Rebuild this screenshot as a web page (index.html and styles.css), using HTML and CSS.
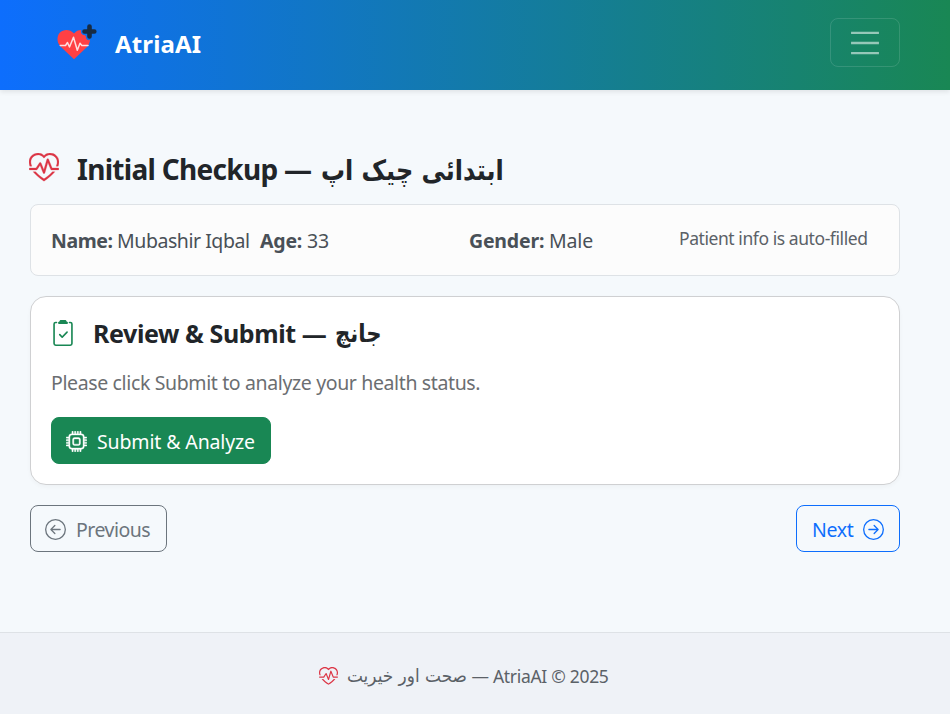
FILE: index.html
```html
<!DOCTYPE html>
<html lang="en">
<head>
<meta charset="utf-8">
<title>AtriaAI</title>
<link rel="stylesheet" href="styles.css">
</head>
<body>
<svg class="sprite" aria-hidden="true">
  <symbol id="heart-pulse" viewBox="0 0 16 16"><path d="m8 2.748-.717-.737C5.6.281 2.514.878 1.4 3.053.918 3.995.78 5.323 1.508 7H.43c-2.128-5.697 4.165-8.83 7.394-5.857q.09.083.176.171a3 3 0 0 1 .176-.17c3.23-2.974 9.522.159 7.394 5.856h-1.078c.728-1.677.59-3.005.108-3.947C13.486.878 10.4.28 8.717 2.01zM2.212 10h1.315C4.593 11.183 6.05 12.458 8 13.795c1.949-1.337 3.407-2.612 4.473-3.795h1.315c-1.265 1.566-3.14 3.25-5.788 5-2.648-1.75-4.523-3.434-5.788-5"/><path d="M10.464 3.314a.5.5 0 0 0-.945.049L7.921 8.956 6.464 5.314a.5.5 0 0 0-.88-.091L3.732 8H.5a.5.5 0 0 0 0 1H4a.5.5 0 0 0 .416-.223l1.473-2.209 1.647 4.118a.5.5 0 0 0 .945-.049l1.598-5.593 1.457 3.642A.5.5 0 0 0 12 9h3.5a.5.5 0 0 0 0-1h-3.162z"/></symbol>
</svg>
<nav class="navbar">
  <a class="brand">
    <svg class="logo" viewBox="0 0 40 36">
      <path fill="#ff4044" d="M17 35.200 4 23C-.5 19-.5 12 3 8.500 6.500 5 13 5 17 9.500c2-2.500 4.500-3.500 7-3.500-.5 2.500.5 4.500 2.500 5 2 0 2.500 1 2.500 2.500 0 2 2 3 4 2.500-.3 2.600-1.300 5-3 7z"/>
      <path fill="none" stroke="#ffdedf" stroke-width="1.500" stroke-linejoin="round" stroke-linecap="round" d="M3.300 21.500H8.500l2-3 2 4.500L16.500 13.200l3.800 13 2.700-7 1.800 2.300h6.200"/>
      <path fill="none" stroke="#172b42" stroke-width="4.600" stroke-linecap="round" d="M32.500 2.500v10M27.500 7.500h9.800"/>
    </svg>
    <span class="brand-name">AtriaAI</span>
  </a>
  <button class="toggler" aria-label="Menu"><svg viewBox="0 0 30 30"><path d="M4 7h22M4 15h22M4 23h22"/></svg></button>
</nav>
<main class="page">
  <h1 class="title"><svg class="title-icon"><use href="#heart-pulse"/></svg><span class="title-text">Initial Checkup —</span><span class="ur ur-title" lang="ur">ابتدائی چیک اپ</span></h1>
  <section class="patient">
    <div class="who"><span class="name"><b>Name:</b> Mubashir Iqbal</span><span class="age"><b>Age:</b> 33</span></div>
    <div class="gender"><b>Gender:</b> Male</div>
    <div class="note">Patient info is auto-filled</div>
  </section>
  <section class="card">
    <h2 class="card-title"><svg class="card-icon" viewBox="0 0 16 16"><path d="M9.500 0a.5.5 0 0 1 .5.5.5.5 0 0 0 .5.5.5.5 0 0 1 .5.5V2a.5.5 0 0 1-.5.5h-5A.5.5 0 0 1 5 2v-.5a.5.5 0 0 1 .5-.5.5.5 0 0 0 .5-.5.5.5 0 0 1 .5-.5z"/><path d="M3 2.500a.5.5 0 0 1 .5-.5H4a.5.5 0 0 0 0-1h-.5A1.500 1.500 0 0 0 2 2.500v12A1.500 1.500 0 0 0 3.500 16h9a1.500 1.500 0 0 0 1.500-1.500v-12A1.500 1.500 0 0 0 12.500 1H12a.5.5 0 0 0 0 1h.5a.5.5 0 0 1 .5.5v12a.5.5 0 0 1-.5.5h-9a.5.5 0 0 1-.5-.5z"/><path d="M10.854 7.854a.5.5 0 0 0-.708-.708L7.500 9.793 6.354 8.646a.5.5 0 1 0-.708.708l1.500 1.500a.5.5 0 0 0 .708 0z"/></svg><span class="card-text">Review &amp; Submit —</span><span class="ur ur-card" lang="ur">جانچ</span></h2>
    <p class="lead">Please click Submit to analyze your health status.</p>
    <button class="btn submit"><svg viewBox="0 0 16 16"><path d="M5 0a.5.5 0 0 1 .5.5V2h1V.5a.5.5 0 0 1 1 0V2h1V.5a.5.5 0 0 1 1 0V2h1V.5a.5.5 0 0 1 1 0V2A2.500 2.500 0 0 1 14 4.500h1.500a.5.5 0 0 1 0 1H14v1h1.500a.5.5 0 0 1 0 1H14v1h1.500a.5.5 0 0 1 0 1H14v1h1.500a.5.5 0 0 1 0 1H14a2.500 2.500 0 0 1-2.500 2.500v1.500a.5.5 0 0 1-1 0V14h-1v1.500a.5.5 0 0 1-1 0V14h-1v1.500a.5.5 0 0 1-1 0V14h-1v1.500a.5.5 0 0 1-1 0V14A2.500 2.500 0 0 1 2 11.500H.5a.5.5 0 0 1 0-1H2v-1H.5a.5.5 0 0 1 0-1H2v-1H.5a.5.5 0 0 1 0-1H2v-1H.5a.5.5 0 0 1 0-1H2A2.500 2.500 0 0 1 4.500 2V.5A.5.5 0 0 1 5 0m-.5 3A1.500 1.500 0 0 0 3 4.500v7A1.500 1.500 0 0 0 4.500 13h7a1.500 1.500 0 0 0 1.500-1.500v-7A1.500 1.500 0 0 0 11.500 3zM5 6.500A1.500 1.500 0 0 1 6.500 5h3A1.500 1.500 0 0 1 11 6.500v3A1.500 1.500 0 0 1 9.500 11h-3A1.500 1.500 0 0 1 5 9.500zM6.500 6a.5.5 0 0 0-.5.5v3a.5.5 0 0 0 .5.5h3a.5.5 0 0 0 .5-.5v-3a.5.5 0 0 0-.5-.5z"/></svg><span>Submit &amp; Analyze</span></button>
  </section>
  <div class="pager">
    <button class="btn prev"><svg viewBox="0 0 16 16"><path d="M1 8a7 7 0 1 0 14 0A7 7 0 0 0 1 8m15 0A8 8 0 1 1 0 8a8 8 0 0 1 16 0m-4.500-.5a.5.5 0 0 1 0 1H5.707l2.147 2.146a.5.5 0 0 1-.708.708l-3-3a.5.5 0 0 1 0-.708l3-3a.5.5 0 1 1 .708.708L5.707 7.500z"/></svg><span>Previous</span></button>
    <button class="btn next"><span>Next</span><svg viewBox="0 0 16 16"><path d="M1 8a7 7 0 1 0 14 0A7 7 0 0 0 1 8m15 0A8 8 0 1 1 0 8a8 8 0 0 1 16 0M4.500 7.500a.5.5 0 0 0 0 1h5.793l-2.147 2.146a.5.5 0 0 0 .708.708l3-3a.5.5 0 0 0 0-.708l-3-3a.5.5 0 1 0-.708.708L10.293 7.500z"/></svg></button>
  </div>
</main>
<footer class="footer"><svg class="foot-icon"><use href="#heart-pulse"/></svg><span class="ur ur-foot" lang="ur">صحت اور خیریت</span><span class="foot-text">— AtriaAI © 2025</span></footer>
</body>
</html>
```
FILE: styles.css
```css
* { box-sizing: border-box; }
body {
  margin: 0;
  height: 714px;
  display: flex;
  flex-direction: column;
  background: #f5f9fc;
  color: #212529;
  font: 19.500px/30px "Noto Sans", "Open Sans", sans-serif;
  letter-spacing: -0.37px;
  white-space: nowrap;
  overflow: hidden;
}
.sprite { display: none; }
svg { flex: none; fill: currentColor; }
b { font-weight: 700; }
.navbar {
  flex: none;
  height: 90px;
  padding: 0 50px 6px 57px;
  display: flex;
  align-items: center;
  justify-content: space-between;
  background: linear-gradient(90deg, #0d6efd, #198754);
  box-shadow: 0 2px 5px rgba(0, 0, 0, .09);
}
.brand { display: flex; align-items: center; gap: 18px; color: #fff; }
.logo { width: 40px; height: 36px; }
.brand-name { font-size: 24px; font-weight: 700; letter-spacing: 0.15px; padding-top: 4px; }
.toggler {
  width: 70px;
  height: 49px;
  padding: 0;
  border: 1px solid rgba(255, 255, 255, .13);
  border-radius: 8px;
  background: none;
  display: flex;
  align-items: center;
  justify-content: center;
}
.toggler svg { width: 40px; height: 38px; margin-top: 1px; fill: none; stroke: rgba(255, 255, 255, .55); stroke-width: 1.900; }
.page { flex: 1; padding: 60px 50px 0 30px; }
.title { margin: 0; height: 54px; display: flex; align-items: flex-start; font-size: 28px; line-height: 38px; font-weight: 700; }
.title-icon { width: 30px; height: 30px; margin: 3px 18px 0 -1px; color: #dc3545; stroke: currentColor; stroke-width: .15; }
.title-text { width: 236px; letter-spacing: -0.700px; }
.ur { display: inline-block; font-family: "DejaVu Sans", sans-serif; letter-spacing: 0; transform-origin: 0 50%; }
.ur-title { font-size: 28px; margin: 2px 0 0 8px; transform: scaleX(.855); }
.patient {
  height: 72px;
  padding: 2px 20px 0;
  display: grid;
  grid-template-columns: 418px 210px 1fr;
  align-items: center;
  border: 1px solid #dee2e6;
  border-radius: 8px;
  background: #fcfcfc;
  color: #495057;
}
.who { display: flex; }
.name { width: 209px; letter-spacing: -0.450px; }
.age, .gender { letter-spacing: -0.200px; }
.note { font-size: 17.500px; letter-spacing: -0.430px; padding-bottom: 6px; color: #5b6167; }
.card {
  height: 189px;
  margin-top: 20px;
  padding: 20px;
  border: 1px solid #cfd0d2;
  border-radius: 16px;
  background: #fff;
  box-shadow: 0 2px 4px rgba(0, 0, 0, .03);
}
.card-title { margin: 0; height: 51px; display: flex; font-size: 25px; line-height: 32px; font-weight: 700; }
.card-icon { width: 26px; height: 26px; margin: 3px 17px 0 -1px; color: #198754; }
.card-text { width: 234px; letter-spacing: -0.400px; }
.ur-card { font-size: 25px; margin: 1px 0 0 8px; transform: scaleX(.85); }
.lead { margin: 0 0 19px; color: #6b6e71; }
.btn {
  height: 47px;
  padding: 2px 15px 0 14px;
  display: flex;
  align-items: center;
  gap: 10px;
  border: 1px solid;
  border-radius: 8px;
  background: none;
  font: inherit;
  letter-spacing: inherit;
}
.btn svg { width: 21px; height: 21px; margin-top: -1px; }
.submit { width: 220px; background: #198754; border-color: #198754; color: #fff; letter-spacing: -0.130px; }
.submit svg { stroke: currentColor; stroke-width: .3; }
.pager { display: flex; justify-content: space-between; margin-top: 20px; }
.prev { width: 137px; color: #6c757d; letter-spacing: -0.500px; }
.next { width: 104px; padding-left: 15px; color: #0d6efd; }
.footer {
  flex: none;
  height: 82px;
  padding: 5px 22px 0 0;
  display: flex;
  align-items: center;
  justify-content: center;
  border-top: 1px solid #dee2e6;
  background: #eff2f7;
  color: #5b6167;
  font-size: 17.500px;
}
.foot-icon { width: 19px; height: 19px; margin: 0 9px 0 0; color: #dc3545; }
.ur-foot { width: 119px; font-size: 18px; transform: scaleX(.94); }
.foot-text { margin-left: 5px; letter-spacing: -0.300px; }
```
